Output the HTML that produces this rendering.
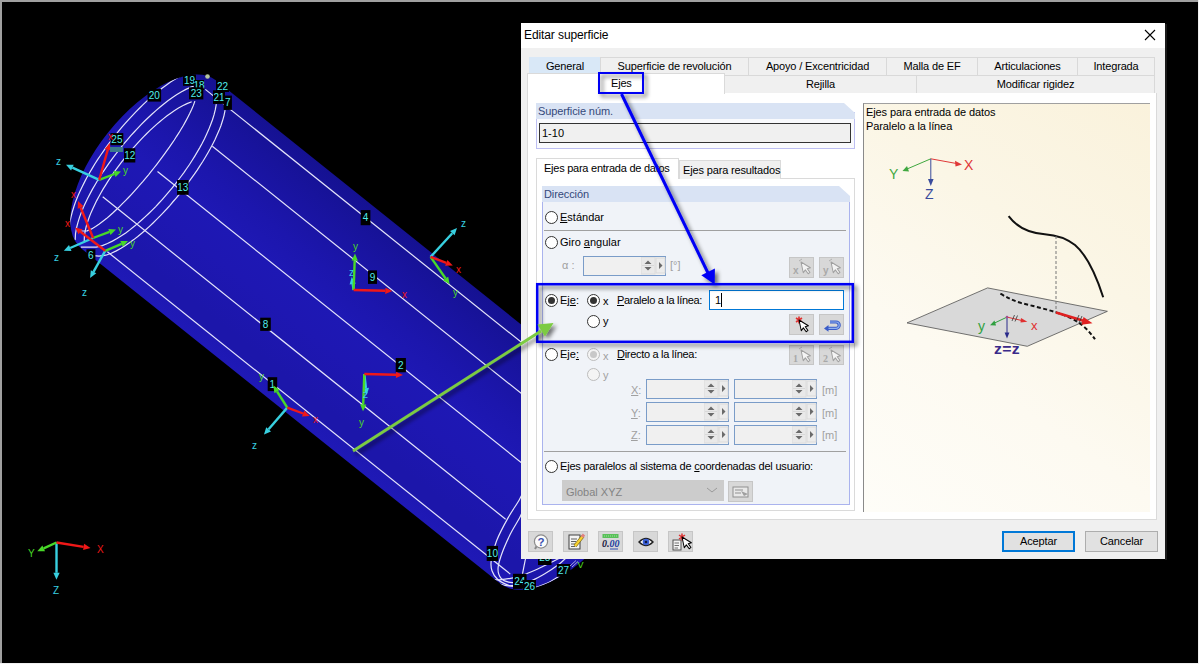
<!DOCTYPE html>
<html><head><meta charset="utf-8">
<style>
*{box-sizing:border-box;margin:0;padding:0}
html,body{width:1199px;height:664px;overflow:hidden;background:#000;font-family:"Liberation Sans",sans-serif;font-size:11px;color:#000}
.a{position:absolute}
#bg{position:absolute;left:0;top:0}
#dlg{position:absolute;left:521px;top:23px;width:644px;height:536px;background:#f0f0f0}
.t{position:absolute;white-space:nowrap;line-height:13px;font-size:11px}
.tab{position:absolute;background:#f0f0f0;border:1px solid #d9d9d9;border-bottom:none;text-align:center;line-height:16px;font-size:11px;letter-spacing:-0.15px}
.hdr{position:absolute;background:#dae3f3;color:#3f5b8a;line-height:15px;padding-left:2px;font-size:11px}
.radio{position:absolute;width:13px;height:13px;border:1px solid #333;border-radius:50%;background:#fff}
.radio.on::after{content:"";position:absolute;left:2px;top:2px;width:7px;height:7px;border-radius:50%;background:#333}
.radio.dis{border-color:#bcbcbc;background:#f4f4f4}
.radio.dis.on::after{background:#c8c8c8}
.inp{position:absolute;border:1px solid #7a9cc8;background:#f0f0f0}
.spin{position:absolute;top:1px;width:14px;bottom:1px;border-left:1px solid #dcdcdc}
.btn{position:absolute;background:#e1e1e1;border:1px solid #adadad}
.ibtn{position:absolute;background:#d8d8d8;border:1px solid #c6c6c6}
u{text-decoration:underline}
</style></head><body>
<svg id="bg" width="1199" height="664" viewBox="0 0 1199 664">
<rect x="0" y="0" width="1199" height="664" fill="#000"/>
<defs>
<linearGradient id="cyl" gradientUnits="userSpaceOnUse" x1="458.3" y1="274.2" x2="323.6" y2="442.5">
<stop offset="0" stop-color="rgb(21,17,146)"/>
<stop offset="0.13" stop-color="rgb(24,19,156)"/>
<stop offset="0.36" stop-color="rgb(28,22,173)"/>
<stop offset="0.5" stop-color="rgb(30,24,180)"/>
<stop offset="0.64" stop-color="rgb(30,23,178)"/>
<stop offset="0.87" stop-color="rgb(28,22,170)"/>
<stop offset="0.925" stop-color="rgb(28,22,170)"/>
<stop offset="0.94" stop-color="rgb(30,24,179)"/>
<stop offset="1" stop-color="rgb(31,25,182)"/>
</linearGradient>
</defs>
<!-- cylinder silhouette -->
<!--SCENE-->
<path d="M216.2,80.5 L634.8,415.4 A54,107.75 38.66 0 1 500.1,583.6 L81.6,248.8 A52,107.75 38.66 0 1 216.2,80.5 Z" fill="url(#cyl)"/>
<clipPath id="silc"><path d="M216.2,80.5 L634.8,415.4 A54,107.75 38.66 0 1 500.1,583.6 L81.6,248.8 A52,107.75 38.66 0 1 216.2,80.5 Z"/></clipPath>
<g stroke="#f0f0ff" stroke-width="1.2" fill="none" clip-path="url(#silc)" opacity="0.95"><path d="M205.3,89.4 L652.7,447.3"/><path d="M212.3,146.2 L627.7,478.6"/><path d="M157.5,171.5 L594.0,520.7"/><path d="M102.7,196.8 L505.6,519.2"/><path d="M107.4,251.8 L510.3,574.1"/><path d="M190.1,71.2 L184.9,73.6 L180.0,76.2 L175.4,78.9 L170.9,81.8 L166.5,84.9 L162.3,88.0 L158.2,91.2 L154.3,94.6 L150.4,97.9 L146.5,101.4 L142.8,104.9 L139.2,108.5 L135.6,112.1 L132.1,115.8 L128.6,119.6 L125.2,123.3 L121.9,127.2 L118.6,131.1 L115.4,135.0 L112.3,139.0 L109.2,143.1 L106.2,147.2 L103.3,151.3 L100.4,155.5 L97.6,159.7 L94.8,164.0 L92.2,168.4 L89.6,172.8 L87.0,177.3 L84.6,181.9 L82.3,186.5 L80.0,191.2 L77.9,196.0 L75.9,200.9 L74.1,206.0 L72.5,211.2 L71.1,216.5 L69.9,222.2 L69.3,228.1 L69.4,234.7"/><path d="M203.2,83.9 L196.6,85.0 L191.0,87.0 L185.9,89.4 L181.1,92.0 L176.5,94.8 L172.1,97.7 L167.9,100.8 L163.8,104.0 L159.8,107.3 L155.9,110.6 L152.1,114.0 L148.4,117.5 L144.7,121.0 L141.1,124.6 L137.6,128.3 L134.2,132.0 L130.8,135.7 L127.5,139.6 L124.2,143.4 L121.0,147.3 L117.9,151.3 L114.8,155.3 L111.8,159.3 L108.9,163.4 L106.0,167.6 L103.1,171.8 L100.4,176.0 L97.7,180.3 L95.1,184.7 L92.5,189.1 L90.1,193.6 L87.7,198.2 L85.5,202.8 L83.3,207.6 L81.3,212.4 L79.5,217.4 L77.9,222.6 L76.5,228.0 L75.5,233.7 L75.2,239.9"/><path d="M191.7,101.7 L187.0,103.6 L182.6,105.7 L178.5,108.1 L174.6,110.6 L170.7,113.2 L167.1,115.8 L163.5,118.6 L160.0,121.5 L156.6,124.4 L153.3,127.4 L150.0,130.4 L146.8,133.5 L143.7,136.7 L140.6,139.8 L137.6,143.1 L134.7,146.3 L131.7,149.7 L128.9,153.0 L126.1,156.4 L123.3,159.9 L120.6,163.3 L118.0,166.9 L115.4,170.4 L112.8,174.0 L110.4,177.7 L107.9,181.4 L105.6,185.1 L103.2,188.9 L101.0,192.8 L98.8,196.7 L96.7,200.6 L94.7,204.7 L92.8,208.8 L90.9,212.9 L89.2,217.2 L87.7,221.6 L86.3,226.2 L85.2,230.9 L84.4,235.9 L84.2,241.4"/><path d="M194.9,101.1 L193.4,105.4 L191.6,109.6 L189.7,113.6 L187.7,117.5 L185.6,121.4 L183.5,125.2 L181.2,129.0 L179.0,132.7 L176.6,136.3 L174.3,140.0 L171.8,143.6 L169.4,147.2 L166.9,150.7 L164.4,154.2 L161.8,157.7 L159.2,161.2 L156.6,164.6 L153.9,168.0 L151.2,171.4 L148.5,174.8 L145.7,178.1 L143.0,181.4 L140.1,184.7 L137.3,187.9 L134.4,191.1 L131.5,194.3 L128.5,197.5 L125.5,200.6 L122.4,203.7 L119.3,206.8 L116.2,209.8 L113.0,212.8 L109.7,215.7 L106.4,218.6 L102.9,221.3 L99.3,224.0 L95.6,226.6 L91.6,228.9 L87.2,230.9 L80.4,231.0"/><path d="M216.3,104.2 L215.3,109.7 L214.0,114.9 L212.4,120.0 L210.6,124.8 L208.7,129.6 L206.6,134.2 L204.5,138.7 L202.2,143.2 L199.8,147.6 L197.3,151.9 L194.8,156.1 L192.2,160.3 L189.5,164.5 L186.7,168.5 L183.9,172.6 L181.0,176.5 L178.0,180.5 L175.0,184.3 L172.0,188.2 L168.8,191.9 L165.6,195.7 L162.4,199.4 L159.0,203.0 L155.7,206.6 L152.2,210.1 L148.7,213.5 L145.1,216.9 L141.4,220.3 L137.6,223.6 L133.7,226.7 L129.8,229.9 L125.7,232.9 L121.4,235.8 L117.0,238.5 L112.4,241.1 L107.5,243.5 L102.3,245.6 L96.3,247.1 L88.6,247.2 L80.8,247.2"/><path d="M225.1,110.1 L224.0,115.6 L222.5,120.8 L220.9,125.7 L219.0,130.6 L216.9,135.3 L214.8,139.9 L212.5,144.4 L210.2,148.8 L207.7,153.2 L205.2,157.5 L202.6,161.8 L199.9,165.9 L197.2,170.1 L194.4,174.2 L191.5,178.2 L188.6,182.2 L185.7,186.2 L182.6,190.1 L179.6,194.0 L176.4,197.8 L173.2,201.5 L170.0,205.3 L166.7,209.0 L163.3,212.6 L159.9,216.2 L156.4,219.7 L152.8,223.2 L149.2,226.6 L145.5,230.0 L141.7,233.3 L137.8,236.5 L133.8,239.6 L129.7,242.6 L125.4,245.6 L121.0,248.3 L116.3,250.9 L111.3,253.3 L105.8,255.2 L99.1,256.1 L90.2,255.4"/><path d="M524.0,490.0 C523.2,491.7 521.9,495.3 519.2,500.0 C516.5,504.7 511.7,511.3 507.9,518.1 C504.1,524.9 499.4,533.7 496.6,540.7 C493.8,547.7 492.1,555.2 491.3,560.2 C490.5,565.2 490.9,567.5 492.0,570.8 C493.1,574.1 495.0,577.3 498.0,579.8 C501.0,582.3 506.0,584.5 510.0,585.8 C514.0,587.0 520.2,587.0 522.2,587.3"/><path d="M524.0,508.0 C523.3,509.6 522.2,512.9 519.9,517.3 C517.6,521.7 513.2,528.2 510.1,534.6 C507.0,541.0 503.1,549.9 501.1,555.7 C499.1,561.5 498.0,565.5 498.0,569.3 C498.0,573.1 499.3,576.2 501.1,578.3 C502.9,580.4 505.3,581.4 508.6,582.1 C511.9,582.9 518.7,582.7 520.7,582.8"/><path d="M492.0,579.0 C493.3,579.1 495.3,580.2 499.6,579.8 C503.9,579.4 511.4,578.5 517.7,576.8 C524.0,575.0 530.9,572.1 537.2,569.3 C543.5,566.5 551.3,562.2 555.3,560.2 C559.3,558.2 560.3,557.7 561.3,557.2"/><path d="M500.0,584.0 C501.7,584.3 505.1,586.2 510.0,585.8 C515.0,585.3 523.9,583.3 529.7,581.3 C535.5,579.3 540.0,576.5 544.8,573.8 C549.6,571.0 554.8,567.4 558.3,564.8 C561.8,562.2 564.7,559.1 566.0,558.0"/><path d="M522.0,588.5 C523.8,588.4 528.7,588.9 532.7,588.1 C536.8,587.3 542.0,585.5 546.3,583.6 C550.6,581.7 555.0,578.9 558.3,576.8 C561.6,574.7 564.7,572.0 566.0,571.0"/><path d="M526.0,558.0 C525.9,558.4 525.8,557.3 525.2,560.2 C524.6,563.1 522.7,572.8 522.2,575.3"/></g>
<g font-family="Liberation Sans" font-size="10" fill="#50ecec" text-anchor="middle"><rect x="183" y="74.5" width="13.0" height="11.3" fill="#000"/><text x="189.5" y="83.8">19</text><rect x="194" y="80" width="10.0" height="10.0" fill="#000"/><text x="199.0" y="88.6">18</text><rect x="189" y="87.3" width="14.3" height="12.1" fill="#000"/><text x="196.2" y="96.9">23</text><rect x="147.5" y="88.8" width="13.6" height="12.8" fill="#000"/><text x="154.3" y="98.8">20</text><rect x="216" y="80" width="13.0" height="12.0" fill="#000"/><text x="222.5" y="89.6">22</text><rect x="213" y="90.3" width="12.0" height="13.6" fill="#000"/><text x="219.0" y="100.7">21</text><rect x="223.6" y="95.6" width="8.3" height="14.3" fill="#000"/><text x="227.8" y="106.3">7</text><rect x="110.5" y="133.1" width="12.8" height="12.1" fill="#000"/><text x="116.9" y="142.7">25</text><rect x="124" y="148.2" width="11.3" height="14.3" fill="#000"/><text x="129.7" y="158.9">12</text><rect x="177" y="180" width="11.6" height="14.8" fill="#000"/><text x="182.8" y="191.0">13</text><rect x="86.4" y="249.3" width="9.0" height="11.3" fill="#000"/><text x="90.9" y="258.6">6</text><rect x="360.7" y="210.1" width="9.7" height="15.1" fill="#000"/><text x="365.5" y="221.2">4</text><rect x="368" y="270.4" width="9.0" height="13.5" fill="#000"/><text x="372.5" y="280.8">9</text><rect x="260.2" y="317.7" width="10.6" height="13.2" fill="#000"/><text x="265.5" y="327.9">8</text><rect x="395.7" y="358" width="10.2" height="14.3" fill="#000"/><text x="400.8" y="368.8">2</text><rect x="267.7" y="377.2" width="9.5" height="13.9" fill="#000"/><text x="272.4" y="387.8">1</text><rect x="486.7" y="545.9" width="11.3" height="15.1" fill="#000"/><text x="492.4" y="557.1">10</text><rect x="513" y="573.8" width="13.6" height="15.1" fill="#000"/><text x="519.8" y="584.9">24</text><rect x="523" y="580" width="13.0" height="12.0" fill="#000"/><text x="529.5" y="589.6">26</text><rect x="556.8" y="564" width="13.6" height="12.8" fill="#000"/><text x="563.6" y="574.0">27</text><rect x="538" y="549" width="13.5" height="16.0" fill="#000"/><text x="544.8" y="560.6">28</text></g>
<g font-family="Liberation Sans"><path d="M99.2,179.8 L72.4,167.7" stroke="#38d0e0" stroke-width="2.4"/><path d="M66.0,164.8 L73.7,164.8 L71.1,170.6 Z" fill="#38d0e0"/><path d="M99.2,179.8 L114.5,174.0" stroke="#48d828" stroke-width="2.4"/><path d="M121.0,171.5 L115.6,176.9 L113.3,171.0 Z" fill="#48d828"/><path d="M99.2,179.8 L107.8,149.7" stroke="#f01818" stroke-width="2.4"/><path d="M109.7,143.0 L110.8,150.6 L104.8,148.9 Z" fill="#f01818"/><text x="108" y="140" fill="#f01818" font-size="10">x</text><text x="123" y="174" fill="#48d828" font-size="10">y</text><text x="56" y="165" fill="#38d0e0" font-size="10">z</text><path d="M93.1,238.0 L70.2,248.0" stroke="#38d0e0" stroke-width="2.4"/><path d="M63.8,250.8 L69.0,245.1 L71.5,250.9 Z" fill="#38d0e0"/><path d="M93.1,238.0 L109.4,231.9" stroke="#48d828" stroke-width="2.4"/><path d="M116.0,229.5 L110.5,234.9 L108.3,229.0 Z" fill="#48d828"/><path d="M93.1,238.0 L80.6,207.5" stroke="#f01818" stroke-width="2.4"/><path d="M78.0,201.0 L83.6,206.3 L77.7,208.7 Z" fill="#f01818"/><text x="71" y="198" fill="#f01818" font-size="10">x</text><text x="118" y="233" fill="#48d828" font-size="10">y</text><text x="54" y="261" fill="#38d0e0" font-size="10">z</text><path d="M105.2,250.8 L93.5,271.8" stroke="#38d0e0" stroke-width="2.4"/><path d="M90.1,277.9 L90.8,270.3 L96.3,273.3 Z" fill="#38d0e0"/><path d="M105.2,250.8 L121.6,243.8" stroke="#48d828" stroke-width="2.4"/><path d="M128.0,241.0 L122.8,246.7 L120.3,240.9 Z" fill="#48d828"/><path d="M105.2,250.8 L80.5,231.7" stroke="#f01818" stroke-width="2.4"/><path d="M75.0,227.4 L82.5,229.2 L78.6,234.2 Z" fill="#f01818"/><text x="65" y="227" fill="#f01818" font-size="10">x</text><text x="130" y="247" fill="#48d828" font-size="10">y</text><text x="82" y="296" fill="#38d0e0" font-size="10">z</text><path d="M430.6,256.9 L452.3,233.2" stroke="#38d0e0" stroke-width="2.4"/><path d="M457.0,228.0 L454.6,235.3 L450.0,231.0 Z" fill="#38d0e0"/><path d="M430.6,256.9 L445.6,278.5" stroke="#48d828" stroke-width="2.4"/><path d="M449.6,284.3 L443.0,280.3 L448.2,276.8 Z" fill="#48d828"/><path d="M430.6,256.9 L446.3,262.9" stroke="#f01818" stroke-width="2.4"/><path d="M452.8,265.4 L445.1,265.8 L447.4,260.0 Z" fill="#f01818"/><text x="456" y="273" fill="#f01818" font-size="10">x</text><text x="453" y="296" fill="#48d828" font-size="10">y</text><text x="461" y="227" fill="#38d0e0" font-size="10">z</text><path d="M353.6,290.0 L352.7,283.9" stroke="#38d0e0" stroke-width="2.4"/><path d="M351.7,277.0 L355.8,283.5 L349.6,284.4 Z" fill="#38d0e0"/><path d="M353.6,290.0 L354.7,260.6" stroke="#48d828" stroke-width="2.4"/><path d="M355.0,253.6 L357.9,260.7 L351.6,260.5 Z" fill="#48d828"/><path d="M353.6,290.0 L385.3,290.8" stroke="#f01818" stroke-width="2.4"/><path d="M392.3,291.0 L385.2,294.0 L385.4,287.7 Z" fill="#f01818"/><text x="402" y="298" fill="#f01818" font-size="10">x</text><text x="353" y="250" fill="#48d828" font-size="10">y</text><text x="349" y="276" fill="#38d0e0" font-size="10">z</text><path d="M364.3,374.0 L365.9,388.0" stroke="#38d0e0" stroke-width="2.4"/><path d="M366.7,395.0 L362.8,388.4 L369.0,387.7 Z" fill="#38d0e0"/><path d="M364.3,374.0 L363.2,404.3" stroke="#48d828" stroke-width="2.4"/><path d="M363.0,411.3 L360.1,404.2 L366.4,404.4 Z" fill="#48d828"/><path d="M364.3,374.0 L396.0,374.8" stroke="#f01818" stroke-width="2.4"/><path d="M403.0,375.0 L395.9,378.0 L396.1,371.7 Z" fill="#f01818"/><text x="359" y="426" fill="#48d828" font-size="10">y</text><text x="363" y="398" fill="#38d0e0" font-size="10">z</text><path d="M287.3,407.6 L268.6,429.3" stroke="#38d0e0" stroke-width="2.4"/><path d="M264.0,434.6 L266.2,427.2 L271.0,431.4 Z" fill="#38d0e0"/><path d="M287.3,407.6 L277.1,391.5" stroke="#48d828" stroke-width="2.4"/><path d="M273.3,385.6 L279.7,389.8 L274.4,393.2 Z" fill="#48d828"/><path d="M287.3,407.6 L303.1,413.5" stroke="#f01818" stroke-width="2.4"/><path d="M309.7,416.0 L302.0,416.5 L304.3,410.6 Z" fill="#f01818"/><text x="313" y="423" fill="#f01818" font-size="10">x</text><text x="259" y="380" fill="#48d828" font-size="10">y</text><text x="252" y="449" fill="#38d0e0" font-size="10">z</text><path d="M56.5,542.5 L56.5,572.8" stroke="#38d0e0" stroke-width="2.4"/><path d="M56.5,579.8 L53.4,572.8 L59.6,572.8 Z" fill="#38d0e0"/><path d="M56.5,542.5 L43.7,548.3" stroke="#48d828" stroke-width="2.4"/><path d="M37.3,551.2 L42.4,545.4 L45.0,551.2 Z" fill="#48d828"/><path d="M56.5,542.5 L83.6,546.9" stroke="#f01818" stroke-width="2.4"/><path d="M90.5,548.0 L83.1,550.0 L84.1,543.8 Z" fill="#f01818"/><text x="97" y="553" fill="#f01818" font-size="10">X</text><text x="28" y="557" fill="#48d828" font-size="10">Y</text><text x="53" y="594" fill="#38d0e0" font-size="10">Z</text><rect x="110" y="147" width="13" height="5" fill="#3a7a8c"/><circle cx="207.5" cy="76.5" r="2.3" fill="#b8c8a0"/><text x="577.5" y="568" fill="#50e020" font-size="9">V</text><path d="M570,566 L576,560.5 M572,567 L578,561.5" stroke="#c8c8f0" stroke-width="0.8"/></g>
<rect x="0" y="0" width="2" height="664" fill="#a0a0a0"/><rect x="0" y="0" width="1199" height="2" fill="#a0a0a0"/>
<rect x="1198" y="0" width="1" height="664" fill="#f0f0f0"/><rect x="0" y="663" width="1199" height="1" fill="#f0f0f0"/>
<!--/SCENE-->
</svg>

<!-- dialog -->
<div class="a" style="left:1165px;top:24px;width:2px;height:536px;background:#1a1a1a"></div>
<div class="a" style="left:521px;top:23px;width:644px;height:536px;background:#f0f0f0"></div>
<div class="a" style="left:521px;top:23px;width:644px;height:25px;background:#fff"></div>
<div class="t" style="left:524px;top:28px;font-size:12px;line-height:14px;letter-spacing:-0.1px">Editar superficie</div>
<svg class="a" style="left:1144px;top:29px" width="12" height="12"><path d="M1,1 L11,11 M11,1 L1,11" stroke="#000" stroke-width="1.1"/></svg>

<!-- tabs row 1 -->
<div class="tab" style="left:529px;top:57px;width:72px;height:18px;background:#d9e8f7;border-color:#d9e8f7">General</div>
<div class="tab" style="left:600px;top:57px;width:149px;height:18px">Superficie de revolución</div>
<div class="tab" style="left:748px;top:57px;width:139px;height:18px">Apoyo / Excentricidad</div>
<div class="tab" style="left:886px;top:57px;width:92px;height:18px">Malla de EF</div>
<div class="tab" style="left:977px;top:57px;width:101px;height:18px">Articulaciones</div>
<div class="tab" style="left:1077px;top:57px;width:78px;height:18px">Integrada</div>
<!-- tabs row 2 -->
<div class="tab" style="left:724px;top:75px;width:193px;height:19px">Rejilla</div>
<div class="tab" style="left:916px;top:75px;width:239px;height:19px">Modificar rigidez</div>
<!-- tab page -->
<div class="a" style="left:527px;top:93px;width:630px;height:427px;background:#fff;border:1px solid #dadada;border-top:none"></div>
<div class="a" style="left:527px;top:73px;width:198px;height:21px;background:#fff;border:1px solid #dadada;border-bottom:none"></div>
<div class="t" style="left:611px;top:76.7px;letter-spacing:-0.2px">Ejes</div>

<!-- Superficie num group -->
<div class="a" style="left:536px;top:112px;width:319px;height:37px;border:1px solid #bdbff2;border-top:none;background:#f9fafd"></div>
<div class="a" style="left:536px;top:103px;width:319px;height:16px;background:#d9e3f4;clip-path:polygon(0 0,calc(100% - 11px) 0,100% 10px,100% 100%,0 100%)"></div>
<div class="t" style="left:538px;top:104.7px;color:#34497a;letter-spacing:-0.1px">Superficie núm.</div>
<div class="a" style="left:539px;top:123px;width:312px;height:20px;background:#f0f0f0;border:1px solid #333"></div>
<div class="t" style="left:542px;top:126.5px">1-10</div>

<!-- sub tabs -->
<div class="a" style="left:536px;top:178px;width:319px;height:333px;background:#fff;border:1px solid #dadada"></div>
<div class="a" style="left:679px;top:160px;width:102px;height:19px;background:#f0f0f0;border:1px solid #dadada;border-bottom:none"></div>
<div class="t" style="left:683px;top:163.6px;letter-spacing:-0.15px">Ejes para resultados</div>
<div class="a" style="left:536px;top:158px;width:143px;height:21px;background:#fff;border:1px solid #dadada;border-bottom:none"></div>
<div class="t" style="left:544px;top:161.6px;letter-spacing:-0.25px">Ejes para entrada de datos</div>

<!-- Direccion group -->
<div class="a" style="left:542px;top:196px;width:308px;height:309px;background:#f0f3f8;border:1px solid #aab3ee;border-top:none"></div>
<div class="a" style="left:542px;top:186px;width:308px;height:16px;background:#d9e3f4;clip-path:polygon(0 0,calc(100% - 11px) 0,100% 10px,100% 100%,0 100%)"></div>
<div class="t" style="left:544px;top:188.2px;color:#34497a;letter-spacing:-0.1px">Dirección</div>

<div class="radio" style="left:545px;top:211px"></div>
<div class="t" style="left:560px;top:211.3px"><u>E</u>stándar</div>
<div class="a" style="left:544px;top:230px;width:302px;height:1px;background:#a0a0a0"></div>
<div class="radio" style="left:545px;top:236px"></div>
<div class="t" style="left:560px;top:236.3px">Giro <u>a</u>ngular</div>
<div class="t" style="left:562px;top:259px;color:#a0a0a0">α :</div>
<div class="inp" style="left:583px;top:256px;width:83px;height:20px"><svg class="a" style="left:57px;top:0" width="25" height="18"><rect x="0" y="0" width="14" height="17" fill="#e9e9e9" stroke="#dcdcdc"/><rect x="15" y="1" width="9" height="15" fill="#ececec" stroke="#dadada"/><line x1="1" y1="8.5" x2="13" y2="8.5" stroke="#d9d9d9"/><path d="M3.5,7 L7,3.5 L10.5,7Z M3.5,10 L10.5,10 L7,13.5Z M18,5 L21.5,8.5 L18,12Z" fill="#6a6a6a"/></svg></div>
<div class="t" style="left:670px;top:259px;color:#a0a0a0">[°]</div>
<div class="ibtn" style="left:789px;top:257px;width:25px;height:21px"><svg class="a" style="left:0;top:0" width="24" height="20"><text x="3" y="16" font-family="Liberation Sans" font-size="10" font-weight="bold" fill="#a8a8a8">x</text><path d="M9,3 L12,1" stroke="#b0b0b0"/><path transform="translate(11,4) scale(1) rotate(-12)" d="M0,0 L0,11 L2.6,8.6 L4.6,13 L6.6,12.1 L4.7,7.8 L8,7.6 Z" fill="#f4f4f4" stroke="#a0a0a0" stroke-width="1" stroke-linejoin="round"/></svg></div>
<div class="ibtn" style="left:819px;top:257px;width:25px;height:21px"><svg class="a" style="left:0;top:0" width="24" height="20"><text x="3" y="16" font-family="Liberation Sans" font-size="10" font-weight="bold" fill="#a8a8a8">y</text><path d="M9,3 L12,1" stroke="#b0b0b0"/><path transform="translate(11,4) scale(1) rotate(-12)" d="M0,0 L0,11 L2.6,8.6 L4.6,13 L6.6,12.1 L4.7,7.8 L8,7.6 Z" fill="#f4f4f4" stroke="#a0a0a0" stroke-width="1" stroke-linejoin="round"/></svg></div>

<div class="radio on" style="left:545px;top:294px"></div>
<div class="t" style="left:560px;top:294.2px">Ej<u>e</u>:</div>
<div class="radio on" style="left:587px;top:294px"></div>
<div class="t" style="left:603px;top:295px">x</div>
<div class="t" style="left:617px;top:294.2px;letter-spacing:-0.3px"><u>P</u>aralelo a la línea:</div>
<div class="a" style="left:709px;top:290px;width:135px;height:20px;background:#fff;border:1px solid #0078d7"></div>
<div class="t" style="left:715px;top:294px">1</div>
<div class="a" style="left:721px;top:293px;width:1px;height:14px;background:#000"></div>
<div class="radio" style="left:587px;top:315px"></div>
<div class="t" style="left:603px;top:315px">y</div>
<div class="ibtn" style="left:789px;top:314px;width:25px;height:21px"><svg class="a" style="left:0;top:0" width="24" height="20"><path d="M6,3 L12,7 M12,3 L6,7 M9,1.5 L9,8.5" stroke="#e03030" stroke-width="1.6"/><path transform="translate(9,5) scale(1) rotate(-12)" d="M0,0 L0,11 L2.6,8.6 L4.6,13 L6.6,12.1 L4.7,7.8 L8,7.6 Z" fill="#ffffff" stroke="#000000" stroke-width="1" stroke-linejoin="round"/></svg></div>
<div class="ibtn" style="left:819px;top:314px;width:25px;height:21px"><svg class="a" style="left:0;top:0" width="24" height="20"><path d="M10,7 L16,7 A3.2,3.2 0 0 1 16,13.4 L7,13.4" fill="none" stroke="#3a5cc8" stroke-width="3.2"/><path d="M10,7 L16,7 A3.2,3.2 0 0 1 16,13.4 L7,13.4" fill="none" stroke="#8fb0f0" stroke-width="1.2"/><path d="M4,13.4 L8.5,10 L8.5,16.8 Z" fill="#3a5cc8"/></svg></div>

<div class="radio" style="left:545px;top:348px"></div>
<div class="t" style="left:560px;top:348px">Eje<u>:</u></div>
<div class="radio dis on" style="left:587px;top:348px"></div>
<div class="t" style="left:603px;top:350px;color:#a0a0a0">x</div>
<div class="t" style="left:617px;top:348px;letter-spacing:-0.3px"><u>D</u>irecto a la línea:</div>
<div class="ibtn" style="left:789px;top:345px;width:25px;height:20px"><svg class="a" style="left:0;top:0" width="24" height="19"><text x="3" y="16" font-family="Liberation Serif" font-size="10" font-weight="bold" fill="#a8a8a8">1</text><path d="M9,3 L12,1" stroke="#b0b0b0"/><path transform="translate(11,4) scale(1) rotate(-12)" d="M0,0 L0,11 L2.6,8.6 L4.6,13 L6.6,12.1 L4.7,7.8 L8,7.6 Z" fill="#f4f4f4" stroke="#a0a0a0" stroke-width="1" stroke-linejoin="round"/></svg></div>
<div class="ibtn" style="left:819px;top:345px;width:25px;height:20px"><svg class="a" style="left:0;top:0" width="24" height="19"><text x="3" y="16" font-family="Liberation Serif" font-size="10" font-weight="bold" fill="#a8a8a8">2</text><path d="M9,3 L12,1" stroke="#b0b0b0"/><path transform="translate(11,4) scale(1) rotate(-12)" d="M0,0 L0,11 L2.6,8.6 L4.6,13 L6.6,12.1 L4.7,7.8 L8,7.6 Z" fill="#f4f4f4" stroke="#a0a0a0" stroke-width="1" stroke-linejoin="round"/></svg></div>
<div class="radio dis" style="left:587px;top:368px"></div>
<div class="t" style="left:603px;top:369px;color:#a0a0a0">y</div>

<div class="t" style="left:631px;top:384px;color:#a0a0a0"><u>X</u>:</div>
<div class="inp" style="left:646px;top:379px;width:83px;height:20px"><svg class="a" style="left:57px;top:0" width="25" height="18"><rect x="0" y="0" width="14" height="17" fill="#e9e9e9" stroke="#dcdcdc"/><rect x="15" y="1" width="9" height="15" fill="#ececec" stroke="#dadada"/><line x1="1" y1="8.5" x2="13" y2="8.5" stroke="#d9d9d9"/><path d="M3.5,7 L7,3.5 L10.5,7Z M3.5,10 L10.5,10 L7,13.5Z M18,5 L21.5,8.5 L18,12Z" fill="#6a6a6a"/></svg></div>
<div class="inp" style="left:734px;top:379px;width:83px;height:20px"><svg class="a" style="left:57px;top:0" width="25" height="18"><rect x="0" y="0" width="14" height="17" fill="#e9e9e9" stroke="#dcdcdc"/><rect x="15" y="1" width="9" height="15" fill="#ececec" stroke="#dadada"/><line x1="1" y1="8.5" x2="13" y2="8.5" stroke="#d9d9d9"/><path d="M3.5,7 L7,3.5 L10.5,7Z M3.5,10 L10.5,10 L7,13.5Z M18,5 L21.5,8.5 L18,12Z" fill="#6a6a6a"/></svg></div>
<div class="t" style="left:822px;top:384px;color:#a0a0a0">[m]</div>
<div class="t" style="left:631px;top:406.5px;color:#a0a0a0"><u>Y</u>:</div>
<div class="inp" style="left:646px;top:402px;width:83px;height:20px"><svg class="a" style="left:57px;top:0" width="25" height="18"><rect x="0" y="0" width="14" height="17" fill="#e9e9e9" stroke="#dcdcdc"/><rect x="15" y="1" width="9" height="15" fill="#ececec" stroke="#dadada"/><line x1="1" y1="8.5" x2="13" y2="8.5" stroke="#d9d9d9"/><path d="M3.5,7 L7,3.5 L10.5,7Z M3.5,10 L10.5,10 L7,13.5Z M18,5 L21.5,8.5 L18,12Z" fill="#6a6a6a"/></svg></div>
<div class="inp" style="left:734px;top:402px;width:83px;height:20px"><svg class="a" style="left:57px;top:0" width="25" height="18"><rect x="0" y="0" width="14" height="17" fill="#e9e9e9" stroke="#dcdcdc"/><rect x="15" y="1" width="9" height="15" fill="#ececec" stroke="#dadada"/><line x1="1" y1="8.5" x2="13" y2="8.5" stroke="#d9d9d9"/><path d="M3.5,7 L7,3.5 L10.5,7Z M3.5,10 L10.5,10 L7,13.5Z M18,5 L21.5,8.5 L18,12Z" fill="#6a6a6a"/></svg></div>
<div class="t" style="left:822px;top:406.5px;color:#a0a0a0">[m]</div>
<div class="t" style="left:631px;top:429.4px;color:#a0a0a0"><u>Z</u>:</div>
<div class="inp" style="left:646px;top:425px;width:83px;height:20px"><svg class="a" style="left:57px;top:0" width="25" height="18"><rect x="0" y="0" width="14" height="17" fill="#e9e9e9" stroke="#dcdcdc"/><rect x="15" y="1" width="9" height="15" fill="#ececec" stroke="#dadada"/><line x1="1" y1="8.5" x2="13" y2="8.5" stroke="#d9d9d9"/><path d="M3.5,7 L7,3.5 L10.5,7Z M3.5,10 L10.5,10 L7,13.5Z M18,5 L21.5,8.5 L18,12Z" fill="#6a6a6a"/></svg></div>
<div class="inp" style="left:734px;top:425px;width:83px;height:20px"><svg class="a" style="left:57px;top:0" width="25" height="18"><rect x="0" y="0" width="14" height="17" fill="#e9e9e9" stroke="#dcdcdc"/><rect x="15" y="1" width="9" height="15" fill="#ececec" stroke="#dadada"/><line x1="1" y1="8.5" x2="13" y2="8.5" stroke="#d9d9d9"/><path d="M3.5,7 L7,3.5 L10.5,7Z M3.5,10 L10.5,10 L7,13.5Z M18,5 L21.5,8.5 L18,12Z" fill="#6a6a6a"/></svg></div>
<div class="t" style="left:822px;top:429.4px;color:#a0a0a0">[m]</div>

<div class="a" style="left:544px;top:451px;width:302px;height:1px;background:#a0a0a0"></div>
<div class="radio" style="left:545px;top:460px"></div>
<div class="t" style="left:560px;top:459.7px;letter-spacing:-0.2px">Ejes paralelos al sistema de <u>c</u>oordenadas del usuario:</div>
<div class="a" style="left:562px;top:480px;width:162px;height:21px;background:#cccccc"></div>
<div class="t" style="left:566px;top:485.5px;color:#838383">Global XYZ</div>
<svg class="a" style="left:706px;top:486px" width="12" height="8"><path d="M1,2 L6,6 L11,2" stroke="#9a9a9a" fill="none"/></svg>
<div class="ibtn" style="left:728px;top:481px;width:25px;height:21px"><svg class="a" style="left:0;top:0" width="24" height="20"><rect x="4" y="5" width="15" height="10" fill="#e8e8e8" stroke="#909090"/><path d="M6,8 L14,8 M6,11 L12,11" stroke="#909090"/><path d="M12,9 L19,12 L15,14 Z" fill="#a0a0a0"/></svg></div>

<!-- preview panel -->
<div class="a" style="left:863px;top:103px;width:287px;height:409px;background:linear-gradient(215deg,#faf2dc 0%,#fbf6e6 35%,#fdfaf1 65%,#fefdf8 100%);border-left:1px solid #8a8a8a;border-top:1px solid #a0a0a0"></div>
<div class="t" style="left:866px;top:105.8px;letter-spacing:-0.1px">Ejes para entrada de datos</div>
<div class="t" style="left:866px;top:119.8px;letter-spacing:-0.1px">Paralelo a la línea</div>
<svg class="a" style="left:863px;top:103px" width="287" height="409" viewBox="863 103 287 409">
<g font-family="Liberation Sans">
<path d="M930.8,158.8 L957,163.6" stroke="#e03838" stroke-width="1"/><path d="M962,164.5 L955,160.8 L955.5,166.5Z" fill="#e03838"/>
<path d="M930.8,158.8 L907,169" stroke="#40a840" stroke-width="1"/><path d="M902.5,171 L907,166 L909,171.5Z" fill="#40a840"/>
<path d="M930.8,158.8 L930.8,181" stroke="#3a4c9c" stroke-width="1"/><path d="M930.8,186 L928,179 L933.6,179Z" fill="#3a4c9c"/>
<text x="964" y="170" font-size="14" fill="#e03838">X</text>
<text x="889" y="178.5" font-size="14" fill="#40a840">Y</text>
<text x="925" y="199" font-size="14" fill="#3a4c9c">Z</text>
<path d="M907,322.9 L987.6,287.9 L1107.4,311.3 L1027.3,346.3 Z" fill="#d9d9d9" stroke="#505050" stroke-width="0.8"/>
<path d="M1008.6,216.2 C1016,226 1026,233 1044.8,234.2 C1056,235 1066,238 1075,245 C1088,256 1097,278 1103.2,297.2" fill="none" stroke="#111" stroke-width="2"/>
<path d="M1056,236 L1056,312.4" stroke="#777" stroke-width="1" stroke-dasharray="3 2"/>
<path d="M1000.4,293.7 C1008,298 1014,301 1021.4,303.1 C1033,306 1046,309 1056,312.4 C1064,315 1072,318 1077.5,321.8 C1084,326 1090,332 1095,339.3" fill="none" stroke="#111" stroke-width="2" stroke-dasharray="4 2.5"/>
<path d="M1056,312.4 L1086,321.5" stroke="#e02020" stroke-width="2.6"/><path d="M1092.5,323.3 L1083.5,317 L1081.5,324.8Z" fill="#e02020"/>
<path d="M1076,322 L1079,315 M1079,323 L1082,316" stroke="#333" stroke-width="0.8"/>
<path d="M1007,317.1 L1023,320.8" stroke="#e03030" stroke-width="1"/><path d="M1027.3,321.8 L1021,318 L1020.5,322.5Z" fill="#e03030"/>
<path d="M1012,321 L1014.5,315 M1015,321.5 L1017.5,315.5" stroke="#333" stroke-width="0.8"/>
<path d="M1007,317.1 L993.5,323.5" stroke="#30a040" stroke-width="1"/><path d="M990,325.3 L994.5,320.5 L996,325.5Z" fill="#30a040"/>
<path d="M1007,317.1 L1007,334" stroke="#2a2a8a" stroke-width="1"/><path d="M1007,338.5 L1004.6,332.5 L1009.4,332.5Z" fill="#2a2a8a"/>
<circle cx="1007" cy="317.1" r="1.3" fill="#a05090"/>
<text x="1031" y="329.5" font-size="13" fill="#e03030">x</text>
<text x="978" y="331" font-size="14" fill="#30a040">y</text>
<text x="994" y="354" font-size="14" font-weight="bold" letter-spacing="0.3" fill="#3a2a8a" textLength="26" lengthAdjust="spacingAndGlyphs">z=z</text>
</g>
</svg>

<!-- bottom buttons -->
<div class="ibtn" style="left:528px;top:531px;width:25px;height:21px"><svg class="a" style="left:0;top:0" width="24" height="20"><path d="M6,17 L8,13.5" stroke="#8a8a8a" stroke-width="2"/><circle cx="12" cy="9.5" r="6.6" fill="#fbfbfb" stroke="#8c8c8c" stroke-width="1.2"/><text x="12" y="14" text-anchor="middle" font-family="Liberation Sans" font-weight="bold" font-size="11.5" fill="#3a50b0">?</text></svg></div>
<div class="ibtn" style="left:563px;top:531px;width:25px;height:21px"><svg class="a" style="left:0;top:0" width="24" height="20"><rect x="5" y="3" width="11" height="14" fill="#f4f4f4" stroke="#404040"/><path d="M7,7 L13,7 M7,9.5 L12,9.5 M7,12 L11,12 M7,14.5 L11,14.5" stroke="#606060"/><path d="M11,14 L19,4" stroke="#6a5a10" stroke-width="3.6"/><path d="M11,14 L19,4" stroke="#f8d030" stroke-width="2.4"/><path d="M18,5 L20,2.5" stroke="#e08080" stroke-width="3"/></svg></div>
<div class="ibtn" style="left:598px;top:531px;width:25px;height:21px"><svg class="a" style="left:0;top:0" width="24" height="20"><rect x="3.5" y="2" width="16" height="4" fill="#58c058"/><path d="M5,4 L18,4" stroke="#a0e0a0" stroke-dasharray="1 1"/><text x="3" y="15" font-family="Liberation Serif" font-style="italic" font-weight="bold" font-size="10" fill="#202040">0.<tspan fill="#2040a0">00</tspan></text><path d="M11,17 L19,17" stroke="#3050b0"/></svg></div>
<div class="ibtn" style="left:633px;top:531px;width:25px;height:21px"><svg class="a" style="left:0;top:0" width="24" height="20"><path d="M5,10 Q12,3 19,10 Q12,17 5,10 Z" fill="#fafafa" stroke="#202020" stroke-width="1.4"/><circle cx="12" cy="10" r="3.3" fill="#3a60d8"/><circle cx="12" cy="10" r="1.3" fill="#101840"/></svg></div>
<div class="ibtn" style="left:668px;top:531px;width:25px;height:21px"><svg class="a" style="left:0;top:0" width="24" height="20"><rect x="4" y="8" width="8" height="10" fill="#f4f4f4" stroke="#505050"/><path d="M5.5,11 L10,11 M5.5,13.5 L10,13.5 M5.5,16 L9,16" stroke="#707070"/><path d="M10,3 L16,7 M16,3 L10,7 M13,1.5 L13,8.5" stroke="#e03030" stroke-width="1.5"/><path transform="translate(13,5) scale(1) rotate(-12)" d="M0,0 L0,11 L2.6,8.6 L4.6,13 L6.6,12.1 L4.7,7.8 L8,7.6 Z" fill="#ffffff" stroke="#000000" stroke-width="1" stroke-linejoin="round"/></svg></div>
<div class="btn" style="left:1002px;top:531px;width:73px;height:21px;border:2px solid #0078d7"></div>
<div class="t" style="left:1002px;top:535px;width:73px;text-align:center;letter-spacing:-0.1px">Aceptar</div>
<div class="btn" style="left:1085px;top:531px;width:73px;height:21px"></div>
<div class="t" style="left:1085px;top:535px;width:73px;text-align:center;letter-spacing:-0.1px">Cancelar</div>

<!-- annotations -->
<svg class="a" style="left:0;top:0" width="1199" height="664" viewBox="0 0 1199 664">
<defs>
<filter id="sh" x="-20%" y="-20%" width="140%" height="140%">
<feGaussianBlur in="SourceAlpha" stdDeviation="2.2"/>
<feOffset dx="3" dy="3" result="b"/>
<feComponentTransfer><feFuncA type="linear" slope="0.55"/></feComponentTransfer>
<feMerge><feMergeNode/><feMergeNode in="SourceGraphic"/></feMerge>
</filter>
</defs>
<g filter="url(#sh)">
<rect x="599" y="73" width="44" height="20" fill="none" stroke="#0000f4" stroke-width="2"/>
<rect x="537.2" y="284.2" width="315.6" height="57.6" fill="none" stroke="#0000f4" stroke-width="2.5"/>
<path d="M621.5,94 L708,273" stroke="#0000f4" stroke-width="3" fill="none"/>
<path d="M714.7,284.6 L701.3,275.2 L714.9,268.6 Z" fill="#0000f4"/>
</g>
<g filter="url(#sh)">
<path d="M353,451 L541,331" stroke="#7ccb42" stroke-width="3" fill="none"/>
<path d="M553.5,323 L537.5,324.5 L545,336.5 Z" fill="#7ccb42"/>
</g>
</svg>
</body></html>
